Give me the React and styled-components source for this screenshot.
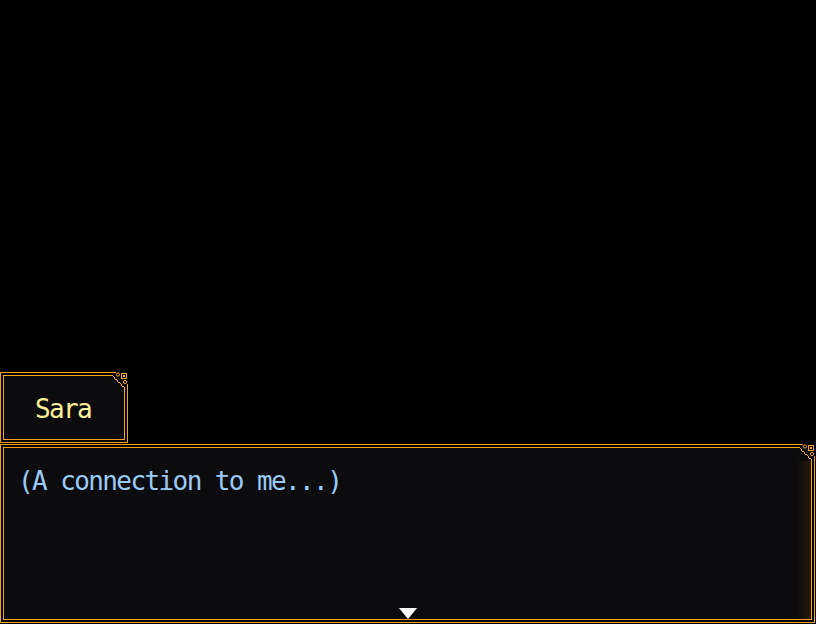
import React from "react";
import styled, { createGlobalStyle } from "styled-components";

const Global = createGlobalStyle`
  html, body { margin: 0; padding: 0; background: #000; }
  body { width: 816px; height: 624px; overflow: hidden; }
`;

const ORANGE = "#f6a21e";

const Stage = styled.div`
  width: 816px;
  height: 624px;
  background: #000;
  display: flex;
  flex-direction: column;
  justify-content: flex-end;
  padding-bottom: 1px;
  box-sizing: border-box;
  font-family: "DejaVu Sans Mono", "Liberation Mono", monospace;
`;

const Frame = styled.div`
  position: relative;
  box-sizing: border-box;
  width: ${(p) => p.$w}px;
  height: ${(p) => p.$h}px;
  border: 1px solid ${ORANGE};
  background: #0c0c0f;
  box-shadow: inset 0 0 0 2px #000, inset 0 0 0 3px ${ORANGE};
`;

const NameFrame = styled(Frame)`
  display: flex;
  align-items: center;
  justify-content: center;
  margin-bottom: 1px;
`;

const NameText = styled.span`
  color: #fff09a;
  font-size: 26px;
  letter-spacing: -1.6px;
  line-height: 1;
  padding-top: 3px;
  margin-right: 2px;
`;

const MessageFrame = styled(Frame)`
  padding: 21px 17px;
  background: linear-gradient(to right, #0c0c0f 0, #0c0c0f 795px, #2a1a08 812px);
`;

const MessageText = styled.p`
  margin: 0;
  color: #9bcbf5;
  font-size: 26px;
  letter-spacing: -1.6px;
  line-height: 30px;
  white-space: pre-wrap;
`;

const Corner = styled.svg`
  position: absolute;
  top: -1px;
  right: -1px;
  width: 17px;
  height: 17px;
  display: block;
`;

const Caret = styled.svg`
  position: absolute;
  left: 50%;
  bottom: 3px;
  transform: translateX(-50%);
  width: 18px;
  height: 11px;
  display: block;
`;

function Ornament() {
  return (
    <Corner viewBox="0 0 17 17" shapeRendering="crispEdges">
      <rect x="0" y="0" width="17" height="4" fill="#000" />
      <rect x="13" y="0" width="4" height="17" fill="#000" />
      <rect x="0" y="4" width="13" height="13" fill="#0c0c0f" />
      <rect x="0" y="0" width="5" height="1" fill={ORANGE} />
      <rect x="16" y="12" width="1" height="5" fill={ORANGE} />
      <rect x="0" y="3" width="2" height="1" fill={ORANGE} />
      <rect x="2" y="4" width="1" height="1" fill={ORANGE} />
      <rect x="3" y="5" width="1" height="2" fill={ORANGE} />
      <rect x="4" y="7" width="2" height="1" fill={ORANGE} />
      <rect x="6" y="8" width="1" height="2" fill={ORANGE} />
      <rect x="7" y="10" width="2" height="1" fill={ORANGE} />
      <rect x="9" y="11" width="1" height="1" fill={ORANGE} />
      <rect x="10" y="12" width="1" height="2" fill={ORANGE} />
      <rect x="11" y="14" width="2" height="1" fill={ORANGE} />
      <rect x="13" y="15" width="1" height="2" fill={ORANGE} />
      <circle cx="7" cy="2.5" r="1.6" fill="none" stroke={ORANGE} strokeWidth="1" shapeRendering="auto" />
      <rect x="10.5" y="1.5" width="5" height="5" fill="none" stroke={ORANGE} strokeWidth="1" />
      <rect x="12" y="3" width="2" height="2" fill={ORANGE} />
      <circle cx="14" cy="10" r="1.6" fill="none" stroke={ORANGE} strokeWidth="1" shapeRendering="auto" />
    </Corner>
  );
}

export default function App() {
  return (
    <>
      <Global />
      <Stage>
        <NameFrame $w={128} $h={71}>
          <NameText>Sara</NameText>
          <Ornament />
        </NameFrame>
        <MessageFrame $w={815} $h={179}>
          <MessageText>(A connection to me...)</MessageText>
          <Ornament />
          <Caret viewBox="0 0 18 11">
            <polygon points="0,0 18,0 9,11" fill="#ffffff" />
          </Caret>
        </MessageFrame>
      </Stage>
    </>
  );
}
